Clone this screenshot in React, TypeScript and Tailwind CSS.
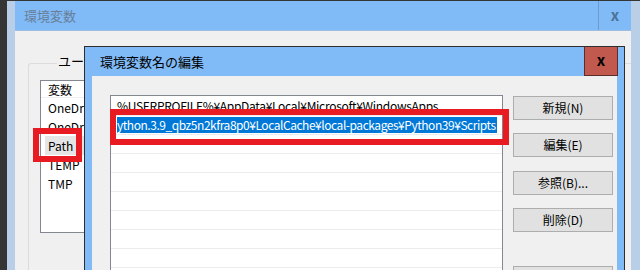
const pathRows = [
  "%USERPROFILE%¥AppData¥Local¥Microsoft¥WindowsApps",
  "ython.3.9_qbz5n2kfra8p0¥LocalCache¥local-packages¥Python39¥Scripts",
  "",
  "",
  "",
  "",
  "",
  "",
  "",
];

const userVars = ["OneDrive", "OneDriveConsumer", "Path", "TEMP", "TMP"];

const buttons = [
  { label: "新規(N)", mt: "mt-[1px]" },
  { label: "編集(E)", mt: "mt-[13px]" },
  { label: "参照(B)...", mt: "mt-[14px]" },
  { label: "削除(D)", mt: "mt-[13px]" },
  { label: "", mt: "mt-[34px]" },
];

export default function App() {
  return (
    <div className="relative w-[640px] h-[270px] overflow-hidden bg-[#353535] font-['Noto_Sans_CJK_JP',sans-serif] text-[12px] text-black">
      {/* Outer window: 環境変数 (inactive) */}
      <div className="ml-[7px] mt-[1px] h-[269px] bg-[#b8cfe7] pl-[8px] pr-[9px] flex flex-col">
        <div className="h-[30px] flex bg-[#80bbf8] border-b border-[#9fbde0]">
          <div className="flex-1 pl-[9px] leading-[29px] text-[13px] text-[#687f99]">環境変数</div>
          <div className="w-[33px] border-l border-[#6d9bcf] flex items-center justify-center text-[15px] font-bold text-[#4d7299] leading-none pb-[3px]">
            x
          </div>
        </div>
        <div className="flex-1 bg-[#f0f0f0] pl-[13px] pt-[32px]">
          <div className="relative h-full border-l border-t border-[#dcdcdc] rounded-tl-[3px]">
            <div className="absolute left-[28px] -top-[11px] bg-[#f0f0f0] px-[1px] leading-[16px] text-[13px]">
              ユーザー環境変数(U)
            </div>
            <div className="ml-[11px] mt-[16px] w-[120px] h-[153px] border border-[#828790] bg-white">
              <div className="h-[17px] leading-[17px] pl-[7px] border-b border-[#f0f0f0]">変数</div>
              {userVars.map((v) => (
                <div key={v} className="h-[19px] leading-[19px]">
                  {v === "Path" ? (
                    <div className="ml-[4px] pl-[3px] bg-[#e5e5e5] h-full">{v}</div>
                  ) : (
                    <div className="pl-[7px] whitespace-nowrap">{v}</div>
                  )}
                </div>
              ))}
            </div>
          </div>
        </div>
      </div>

      {/* Dialog: 環境変数名の編集 */}
      <div className="absolute left-[84px] top-[46px] w-[541px] h-[240px] border border-[#2e2e2e] bg-[#80bbf8] flex flex-col">
        <div className="h-[30px] flex">
          <div className="flex-1 pl-[15px] leading-[29px] text-[13px]">環境変数名の編集</div>
          <div className="w-[34px] mr-[6px] border-l border-r border-b border-[#5b2e2b] bg-[#c2594f] flex items-center justify-center text-[15px] font-bold leading-none pb-[3px]">
            x
          </div>
        </div>
        <div className="flex-1 mx-[7px] bg-[#f0f0f0] flex pl-[18px] pt-[19px] pr-[4px]">
          <div className="w-[393px] border border-[#828790] bg-white overflow-hidden tracking-[-0.3px]">
            {pathRows.map((row, i) => (
              <div
                key={i}
                className={`${i === 0 ? "h-[20px] leading-[19px]" : "h-[19px]"} border-b border-[#ececec] pl-[6px] whitespace-nowrap overflow-hidden`}
              >
                {i === 1 ? (
                  <span className="inline-block mt-[1px] bg-[#0078d7] text-white leading-[16px] pr-[1px] tracking-[-0.46px]">
                    {row}
                  </span>
                ) : (
                  row
                )}
              </div>
            ))}
          </div>
          <div className="ml-[10px] w-[100px] flex flex-col">
            {buttons.map((b, i) => (
              <div
                key={i}
                className={`${b.mt} h-[24px] shrink-0 border border-[#adadad] bg-[#e1e1e1] flex items-center justify-center leading-none`}
              >
                {b.label}
              </div>
            ))}
          </div>
        </div>
      </div>

      {/* Red annotation boxes */}
      <div className="absolute left-[33px] top-[128px] w-[49px] h-[34px] border-[6px] border-[#e81b23]" />
      <div className="absolute left-[110px] top-[109px] w-[399px] h-[36px] border-[6px] border-[#e81b23]" />
    </div>
  );
}
